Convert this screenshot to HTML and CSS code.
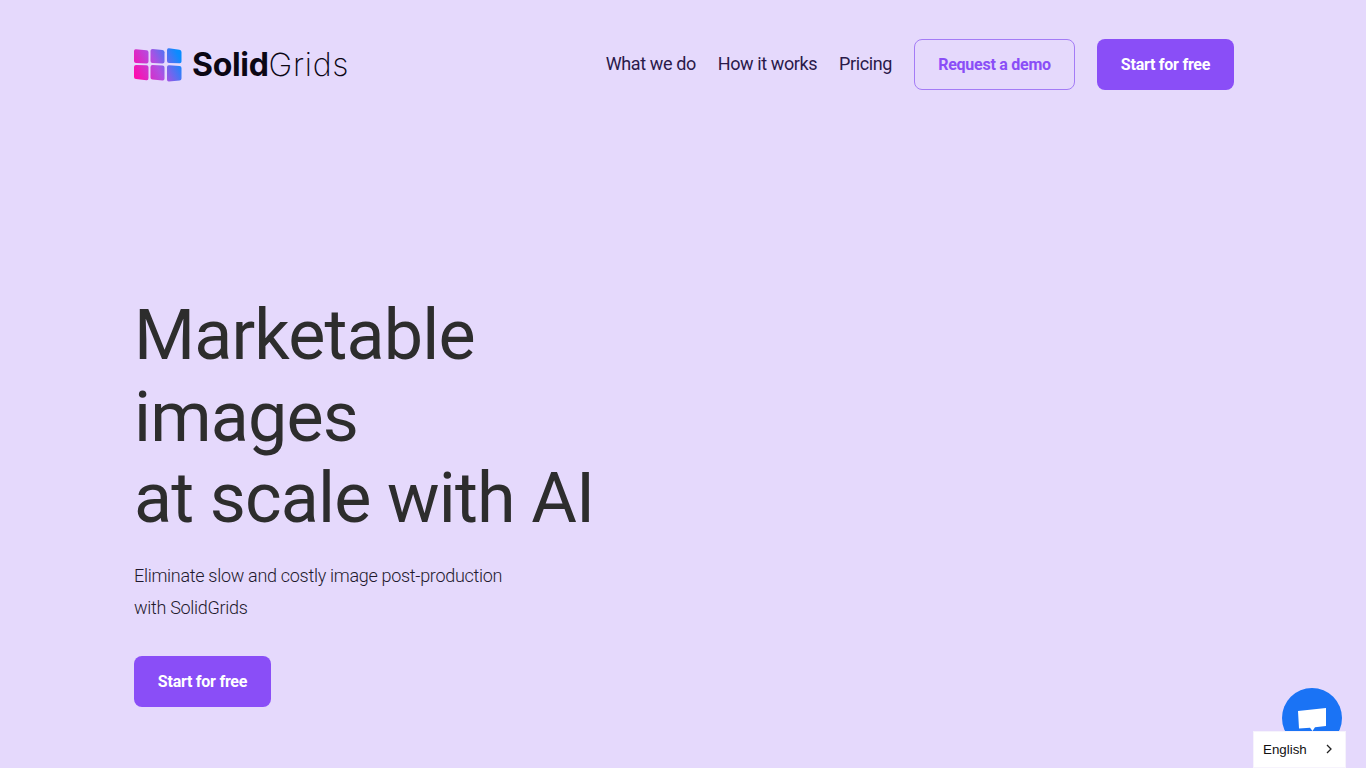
FILE: index.html
```html
<!DOCTYPE html>
<html lang="en">
<head>
<meta charset="utf-8">
<title>SolidGrids</title>
<link rel="stylesheet" href="styles.css">
</head>
<body>
<div class="page">
  <header class="nav">
    <a class="brand" href="#">
      <svg class="mark" width="48" height="34" viewBox="0 0 48 34" aria-hidden="true">
        <defs>
          <linearGradient id="g" gradientUnits="userSpaceOnUse" x1="2" y1="30" x2="45" y2="8">
            <stop offset="0" stop-color="#ff0cae"/>
            <stop offset="0.5" stop-color="#b04fe2"/>
            <stop offset="1" stop-color="#0a8cff"/>
          </linearGradient>
        </defs>
        <g fill="url(#g)">
          <path d="M0 3Q0 1 2 1.2L12.5 2.2Q14.5 2.4 14.5 4.2V13.5Q14.5 15.5 12.5 15.4L2 15Q0 15 0 13Z"/>
          <path d="M16.5 2.8Q16.5 1 18.5 1L28.5 2Q30.5 2.2 30.5 4.2V13.5Q30.5 15.5 28.5 15.5L18.5 15.1Q16.5 15 16.5 13Z"/>
          <path d="M33 2.2Q33 0 35 0.3L45.5 1.8Q47.5 2.1 47.5 4V13.5Q47.5 15.5 45.5 15.3L35 15Q33 15 33 13Z"/>
          <path d="M0 19Q0 17 2 17L12.5 17.2Q14.5 17.2 14.5 19.2V30Q14.5 32.4 12.5 32.2L2 31Q0 30.8 0 29Z"/>
          <path d="M16.5 19Q16.5 17 18.5 17L28.5 17.4Q30.5 17.4 30.5 19.4V30.4Q30.5 32.6 28.5 32.4L18.5 31.6Q16.5 31.4 16.5 29.4Z"/>
          <path d="M33 19Q33 17 35 17.2L45.5 18Q47.5 18.2 47.5 20V30.4Q47.5 32.2 45.5 32.6L35 33.4Q33 33.6 33 31.4Z"/>
        </g>
      </svg>
      <span class="wordmark"><b>Solid</b>Grids</span>
    </a>
    <nav class="links">
      <a class="link" href="#">What we do</a>
      <a class="link" href="#">How it works</a>
      <a class="link" href="#">Pricing</a>
      <a class="btn btn-outline" href="#">Request a demo</a>
      <a class="btn btn-solid" href="#">Start for free</a>
    </nav>
  </header>
  <main class="hero">
    <h1>Marketable<br>images<br>at scale with AI</h1>
    <p>Eliminate slow and costly image post-production<br>with SolidGrids</p>
    <a class="btn btn-solid" href="#">Start for free</a>
  </main>
</div>
<a class="chat" href="#" aria-label="Chat">
  <svg width="32" height="30" viewBox="0 0 32 30" aria-hidden="true"><path d="M2 8L30 5L30 23L19 24.2L16.5 28L14 24.7L3 25.5Z" fill="#fff"/></svg>
</a>
<div class="lang"><span>English</span><svg width="8" height="10" viewBox="0 0 8 10" aria-hidden="true"><path d="M2 1L6 5L2 9" fill="none" stroke="#222" stroke-width="1.3"/></svg></div>
</body>
</html>
```
FILE: styles.css
```css
* { box-sizing: border-box; }
html, body { margin: 0; height: 100%; }
body {
  background: #e5d9fc;
  font-family: "Roboto", "Lato", sans-serif;
  color: #2d2d2d;
  overflow: hidden;
}
a { text-decoration: none; color: inherit; }
.page { width: 1100px; margin-left: 134px; }
.nav {
  display: flex;
  align-items: center;
  justify-content: space-between;
  padding-top: 39px;
}
.brand { display: flex; align-items: center; gap: 10px; }
.mark { display: block; }
.wordmark {
  font-family: "Inter", sans-serif;
  font-size: 32px;
  line-height: 40px;
  font-weight: 200;
  letter-spacing: 0.7px;
  color: #0b0714;
}
.wordmark b { font-weight: 700; letter-spacing: -0.3px; }
.links {
  display: flex;
  align-items: center;
  gap: 22px;
  font-size: 18px;
  color: #2a1a4a;
}
.link { padding-bottom: 3px; letter-spacing: -0.4px; }
.btn {
  display: inline-flex;
  align-items: center;
  justify-content: center;
  height: 51px;
  border-radius: 8px;
  font-size: 16px;
  font-weight: 700;
  letter-spacing: -0.25px;
}
.btn-outline {
  width: 161px;
  border: 1px solid #a47cf6;
  color: #8a4ef7;
}
.btn-solid {
  width: 137px;
  background: #8a4ef7;
  color: #fff;
}
.hero { padding-top: 205px; }
h1 {
  margin: 0;
  font-size: 70px;
  line-height: 81.5px;
  font-weight: 400;
  letter-spacing: -0.85px;
  color: #2d2d2d;
}
.hero p {
  margin: 20px 0 32px;
  font-size: 18px;
  font-weight: 300;
  line-height: 32px;
  letter-spacing: -0.3px;
  color: #1f1a2e;
}
.chat {
  position: fixed;
  left: 1282px;
  top: 688px;
  width: 60px;
  height: 60px;
  border-radius: 50%;
  background: #1a73f5;
  display: flex;
  align-items: center;
  justify-content: center;
}
.lang {
  position: fixed;
  left: 1253px;
  top: 731px;
  width: 93px;
  height: 37px;
  background: #fff;
  display: flex;
  align-items: center;
  justify-content: space-between;
  padding: 0 12px 1px 9px;
  border: 1px solid #f6f3fc;
  font-family: "Liberation Sans", Arial, sans-serif;
  font-size: 13.33px;
  color: #111;
}
```
